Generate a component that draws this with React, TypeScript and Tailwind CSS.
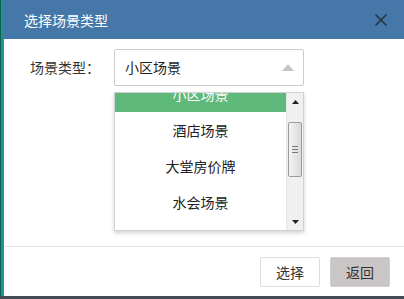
import React from 'react'

const items = ['小区场景', '酒店场景', '大堂房价牌', '水会场景']

export default function App() {
  return (
    <div
      className="w-[404px] h-[299px] flex flex-col bg-white overflow-hidden"
      style={{ fontFamily: '"Noto Sans CJK SC", "Noto Sans", sans-serif' }}
    >
      <div className="flex flex-1 min-h-0">
        {/* left edge of the page behind */}
        <div className="w-[4px] flex">
          <div className="w-[1px] bg-[#145d57]" />
          <div className="flex-1 bg-[#1d968a]" />
        </div>

        <div className="flex-1 flex flex-col">
          {/* header */}
          <div className="h-[39px] bg-[#4677a9] flex items-center justify-between pl-[20px] pr-[16px]">
            <span className="text-white text-[14px] leading-none">选择场景类型</span>
            <svg width="14" height="14" viewBox="0 0 14 14" className="text-[#27313c]">
              <path d="M1.5 1.5L12.5 12.5M12.5 1.5L1.5 12.5" stroke="currentColor" strokeWidth="1.5" />
            </svg>
          </div>

          {/* body */}
          <div className="flex-1 relative">
            <div className="flex items-center pt-[10px] pl-[26px]">
              <span className="w-[84px] text-[14px] text-[#333]">场景类型：</span>
              <div className="w-[190px] h-[37px] border border-[#ccc] rounded-[2px] flex items-center justify-between pl-[10px] pr-[9px]">
                <span className="text-[14px] text-[#222]">小区场景</span>
                <svg width="12" height="7" viewBox="0 0 12 7">
                  <path d="M6 0L12 7H0Z" fill="#c4c4c4" />
                </svg>
              </div>
            </div>

            {/* open dropdown list */}
            <div className="absolute left-[110px] top-[53px] w-[190px] h-[139px] bg-white border border-[#d2d2d2] shadow-[0_2px_4px_rgba(0,0,0,0.18)] flex overflow-hidden">
              <div className="flex-1 overflow-hidden">
                <div className="-mt-[17px]">
                  {items.map((it, i) => (
                    <div
                      key={it}
                      className={
                        'h-[36px] flex items-center justify-center text-[14px] ' +
                        (i === 0 ? 'bg-[#5fb97a] text-white' : 'text-[#222]')
                      }
                    >
                      {it}
                    </div>
                  ))}
                </div>
              </div>
              {/* scrollbar */}
              <div className="w-[17px] bg-[#f0f0f0] border-l border-[#e6e6e6] flex flex-col">
                <div className="h-[17px] flex items-center justify-center">
                  <svg width="7" height="4" viewBox="0 0 7 4">
                    <path d="M3.5 0L7 4H0Z" fill="#222" />
                  </svg>
                </div>
                <div className="mt-[12px] mx-[1px] h-[55px] rounded-[2px] border border-[#9a9a9a] bg-gradient-to-r from-[#f4f4f4] to-[#d9d9d9] flex flex-col items-center justify-center gap-[2px]">
                  <div className="w-[6px] h-[1px] bg-[#777]" />
                  <div className="w-[6px] h-[1px] bg-[#777]" />
                  <div className="w-[6px] h-[1px] bg-[#777]" />
                </div>
                <div className="flex-1" />
                <div className="h-[17px] flex items-center justify-center">
                  <svg width="7" height="4" viewBox="0 0 7 4">
                    <path d="M0 0H7L3.5 4Z" fill="#222" />
                  </svg>
                </div>
              </div>
            </div>
          </div>

          {/* footer */}
          <div className="h-[50px] border-t border-[#e5e5e5] flex items-start justify-end gap-[10px] pt-[10px] pr-[14px]">
            <button className="w-[60px] h-[30px] border border-[#dedede] bg-white text-[14px] text-[#333] rounded-[2px]">
              选择
            </button>
            <button className="w-[60px] h-[30px] border border-[#d4d0cf] bg-[#cac6c5] text-[14px] text-[#333] rounded-[2px]">
              返回
            </button>
          </div>
        </div>
      </div>
      <div className="h-[3px] bg-[#464b53]" />
    </div>
  )
}
